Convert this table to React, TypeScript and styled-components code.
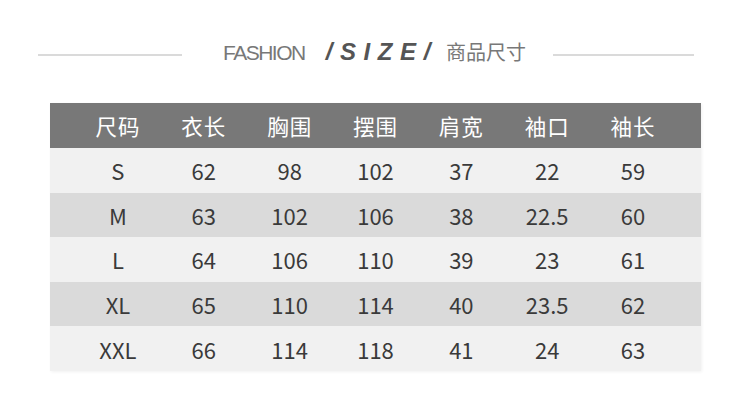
import React from "react";
import styled, { createGlobalStyle } from "styled-components";

const Global = createGlobalStyle`
  html, body { margin: 0; padding: 0; background: #ffffff; }
  body { width: 750px; height: 404px; overflow: hidden; }
`;

const Page = styled.div`
  width: 750px;
  height: 404px;
  background: #ffffff;
  font-family: "Noto Sans CJK SC", "Noto Sans", sans-serif;
`;

const TitleBar = styled.div`
  display: flex;
  align-items: flex-start;
  padding: 38px 0 0 38px;
  height: 27px;
`;

const Rule = styled.div<{ $w: number; $ml: number; $mr: number }>`
  width: ${(p) => p.$w}px;
  height: 2px;
  margin: 16px ${(p) => p.$mr}px 0 ${(p) => p.$ml}px;
  background: #dadada;
  flex: none;
`;

const Title = styled.div`
  line-height: 27px;
  white-space: nowrap;
  color: #787878;
`;

const Fashion = styled.span`
  font-family: "Liberation Sans", Arial, sans-serif;
  font-size: 21px;
  letter-spacing: -1.5px;
  margin-right: 21px;
`;

const Size = styled.span`
  font-family: "Liberation Sans", Arial, sans-serif;
  font-size: 24px;
  font-weight: bold;
  font-style: italic;
  letter-spacing: 7.6px;
  color: #555555;
  margin-right: 8px;
`;

const Cn = styled.span`
  font-family: "Noto Sans CJK SC", sans-serif;
  font-size: 20px;
`;

const Table = styled.div`
  margin: 38px 0 0 50px;
  width: 651px;
  box-shadow: 1px 1px 3px rgba(0, 0, 0, 0.06);
`;

const Row = styled.div<{ $bg: string; $h: number }>`
  display: grid;
  grid-template-columns: repeat(7, 1fr);
  align-items: center;
  padding: 0 25px;
  height: ${(p) => p.$h}px;
  background: ${(p) => p.$bg};
`;

const HeadCell = styled.div`
  text-align: center;
  color: #ffffff;
  font-size: 21.5px;
  letter-spacing: 1px;
  line-height: 1;
`;

const Cell = styled.div`
  text-align: center;
  color: #3a3a3a;
  font-size: 22px;
  line-height: 1;
`;

const headers = ["尺码", "衣长", "胸围", "摆围", "肩宽", "袖口", "袖长"];
const rows = [
  ["S", "62", "98", "102", "37", "22", "59"],
  ["M", "63", "102", "106", "38", "22.5", "60"],
  ["L", "64", "106", "110", "39", "23", "61"],
  ["XL", "65", "110", "114", "40", "23.5", "62"],
  ["XXL", "66", "114", "118", "41", "24", "63"],
];

export default function App() {
  return (
    <Page>
      <Global />
      <TitleBar>
        <Rule $w={144} $ml={0} $mr={41} />
        <Title>
          <Fashion>FASHION</Fashion>
          <Size>/SIZE/</Size>
          <Cn>商品尺寸</Cn>
        </Title>
        <Rule $w={141} $ml={27} $mr={0} />
      </TitleBar>
      <Table>
        <Row $bg="#787878" $h={45}>
          {headers.map((h) => (
            <HeadCell key={h}>{h}</HeadCell>
          ))}
        </Row>
        {rows.map((r, i) => (
          <Row key={r[0]} $bg={i % 2 === 0 ? "#f1f1f1" : "#dadada"} $h={44.6}>
            {r.map((c, j) => (
              <Cell key={j}>{c}</Cell>
            ))}
          </Row>
        ))}
      </Table>
    </Page>
  );
}
